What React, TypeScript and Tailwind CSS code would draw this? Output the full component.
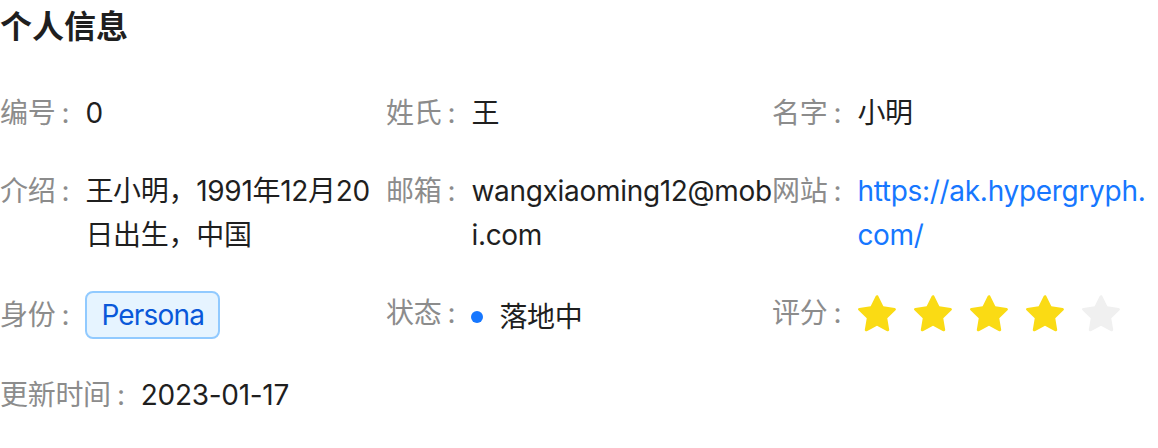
import React from "react";

const font = {
  fontFamily: '"Inter", "Noto Sans CJK SC", sans-serif',
};

function Star({ filled }: { filled: boolean }) {
  return (
    <svg
      viewBox="64 64 896 896"
      className={filled ? "w-[40px] h-[40px] text-[#fadb14]" : "w-[40px] h-[40px] text-[#f0f0f0]"}
      fill="currentColor"
    >
      <path d="M908.1 353.1l-253.9-36.9L540.7 86.1c-3.1-6.3-8.2-11.4-14.5-14.5-15.8-7.8-35-1.3-42.9 14.5L369.8 316.2l-253.9 36.9c-7 1-13.4 4.3-18.3 9.3a32.05 32.05 0 00.6 45.3l183.7 179.1-43.4 252.9a31.95 31.95 0 0046.4 33.7L512 754l227.1 119.4c6.2 3.3 13.4 4.4 20.3 3.2 17.4-3 29.1-19.5 26.1-36.9l-43.4-252.9 183.7-179.1c5-4.9 8.3-11.3 9.3-18.3 2.7-17.5-9.5-33.7-27-36.3z" />
    </svg>
  );
}

function Item({ label, children }: { label: string; children: React.ReactNode }) {
  // one cell of the descriptions grid
  return (
    <div className="flex items-baseline pb-[34px]">
      <span className="shrink-0 text-[#8c8c8c]">
        {label}
        <span className="inline-block ml-[3px] mr-[13px] w-[14px] text-center">:</span>
      </span>
      <span className="min-w-0 flex-1 text-[#1f1f1f] [overflow-wrap:anywhere]">{children}</span>
    </div>
  );
}

export default function App() {
  return (
    <div className="w-[1158px] h-[448px] bg-white pt-[3px]" style={font}>
      <h2 className="text-[32px] leading-[48px] font-semibold text-[#1f1f1f] mb-[40px]">个人信息</h2>
      <div className="grid grid-cols-3 text-[28px] leading-[44px] tracking-[-0.3px]">
        <Item label="编号">0</Item>
        <Item label="姓氏">王</Item>
        <Item label="名字">小明</Item>

        <Item label="介绍">王小明，1991年12月20日出生，中国</Item>
        <Item label="邮箱">wangxiaoming12@mobi.com</Item>
        <Item label="网站">
          <a href="#" className="text-[#1677ff]">
            https://ak.hypergryph.com/
          </a>
        </Item>

        <Item label="身份">
          <span className="inline-block rounded-[8px] border-2 border-[#91caff] bg-[#e6f4ff] px-[14px] text-[#0958d9] tracking-[-0.8px]">
            Persona
          </span>
        </Item>
        <Item label="状态">
          <span className="inline-flex items-center">
            <span className="w-[12px] h-[12px] rounded-full bg-[#1677ff]" />
            <span className="ml-[16px]">落地中</span>
          </span>
        </Item>
        <Item label="评分">
          <span className="inline-flex items-center gap-[16px] align-middle">
            <Star filled />
            <Star filled />
            <Star filled />
            <Star filled />
            <Star filled={false} />
          </span>
        </Item>

        <Item label="更新时间">2023-01-17</Item>
      </div>
    </div>
  );
}
